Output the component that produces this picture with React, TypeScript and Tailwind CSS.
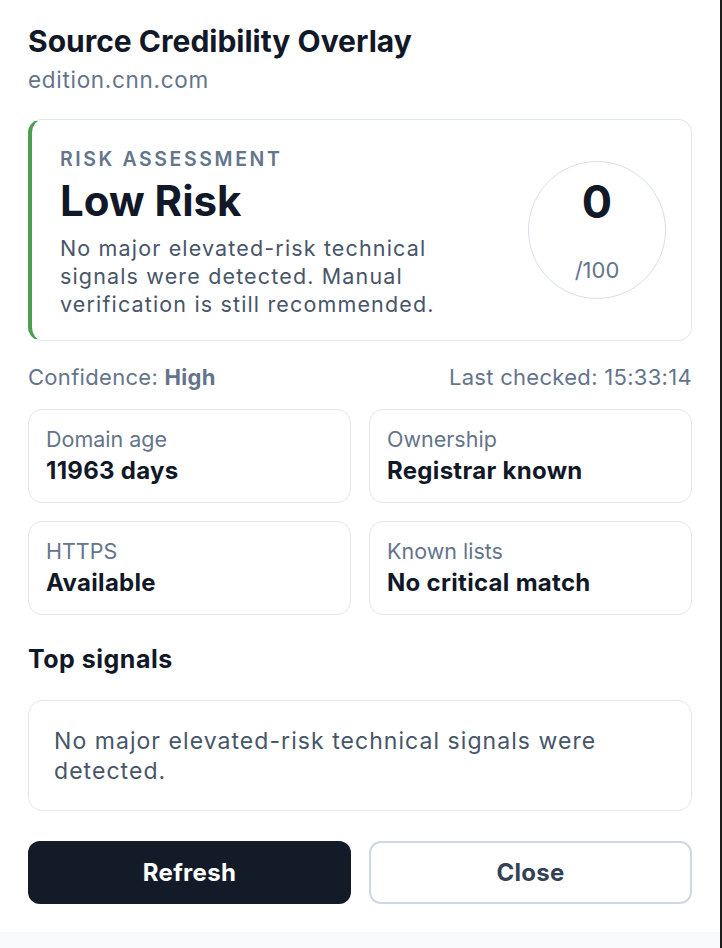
import React from "react";

const font = { fontFamily: "Inter, 'Noto Sans', sans-serif" };

function Stat({ label, value }: { label: string; value: string }) {
  return (
    <div className="rounded-[14px] border border-[#e2e8f0] bg-white px-[17px] pt-[15px] pb-[15px]">
      <div className="text-[21.5px] leading-[28px] text-[#64748b]">{label}</div>
      <div className="mt-[2px] text-[24px] leading-[32px] font-bold tracking-[0.3px] text-[#111827]">{value}</div>
    </div>
  );
}

export default function App() {
  return (
    <div className="flex h-[948px] w-[722px] overflow-hidden bg-[#1c1c1c]" style={font}>
      <div className="flex h-[948px] w-[720px] flex-col">
        <div className="flex h-[932px] flex-col bg-white px-[28px] pt-[23px]">
          <div className="text-[30px] leading-[36px] font-bold text-[#111827]">Source Credibility Overlay</div>
          <div className="mt-[6px] text-[22.5px] leading-[30px] tracking-[0.7px] text-[#64748b]">edition.cnn.com</div>

          <div className="mt-[24px] flex items-center rounded-[14px] border border-[#e2e8f0] border-l-[4px] border-l-[#4c9f52] bg-white pl-[28px] pr-[25px] pt-[27px] pb-[22px]">
            <div className="flex-1">
              <div className="text-[19.5px] leading-[24px] font-semibold uppercase tracking-[2.6px] text-[#64748b]">Risk Assessment</div>
              <div className="mt-[4px] text-[42px] leading-[52px] font-bold text-[#111827]">Low Risk</div>
              <div className="mt-[7px] w-[400px] text-[21.5px] leading-[28px] tracking-[1.15px] text-[#475569]">
                No major elevated-risk technical signals were detected. Manual verification is still recommended.
              </div>
            </div>
            <div className="mb-[5px] flex h-[138px] w-[138px] shrink-0 flex-col items-center justify-center rounded-full border border-[#d9dee8]">
              <div className="text-[45px] leading-[52px] font-bold text-[#111827]">0</div>
              <div className="mt-[28px] text-[22px] leading-[28px] text-[#64748b]">/100</div>
            </div>
          </div>

          <div className="mt-[22px] flex items-center justify-between text-[22px] leading-[28px] tracking-[0.3px] text-[#64748b]">
            <div>
              Confidence: <span className="font-bold">High</span>
            </div>
            <div>Last checked: 15:33:14</div>
          </div>

          <div className="mt-[18px] grid grid-cols-2 gap-[18px]">
            <Stat label="Domain age" value="11963 days" />
            <Stat label="Ownership" value="Registrar known" />
            <Stat label="HTTPS" value="Available" />
            <Stat label="Known lists" value="No critical match" />
          </div>

          <div className="mt-[29px] text-[25px] leading-[30px] font-bold tracking-[0.5px] text-[#111827]">Top signals</div>

          <div className="mt-[26px] rounded-[14px] border border-[#e2e8f0] bg-white pl-[25px] pr-[25px] pt-[25px] pb-[24px] text-[23px] leading-[30px] tracking-[1.05px] text-[#475569]">
            No major elevated-risk technical signals were detected.
          </div>

          <div className="mt-[30px] grid grid-cols-2 gap-[18px]">
            <button className="h-[63px] rounded-[12px] bg-[#131a28] text-[24px] font-bold tracking-[0.3px] text-white">Refresh</button>
            <button className="h-[63px] rounded-[12px] border-2 border-[#cfd7e3] bg-white text-[24px] font-bold tracking-[0.3px] text-[#334155]">Close</button>
          </div>
        </div>
        <div className="flex-1 bg-[#f8f9fb]" />
      </div>
      <div className="w-[2px] bg-[#1c1c1c]" />
    </div>
  );
}
